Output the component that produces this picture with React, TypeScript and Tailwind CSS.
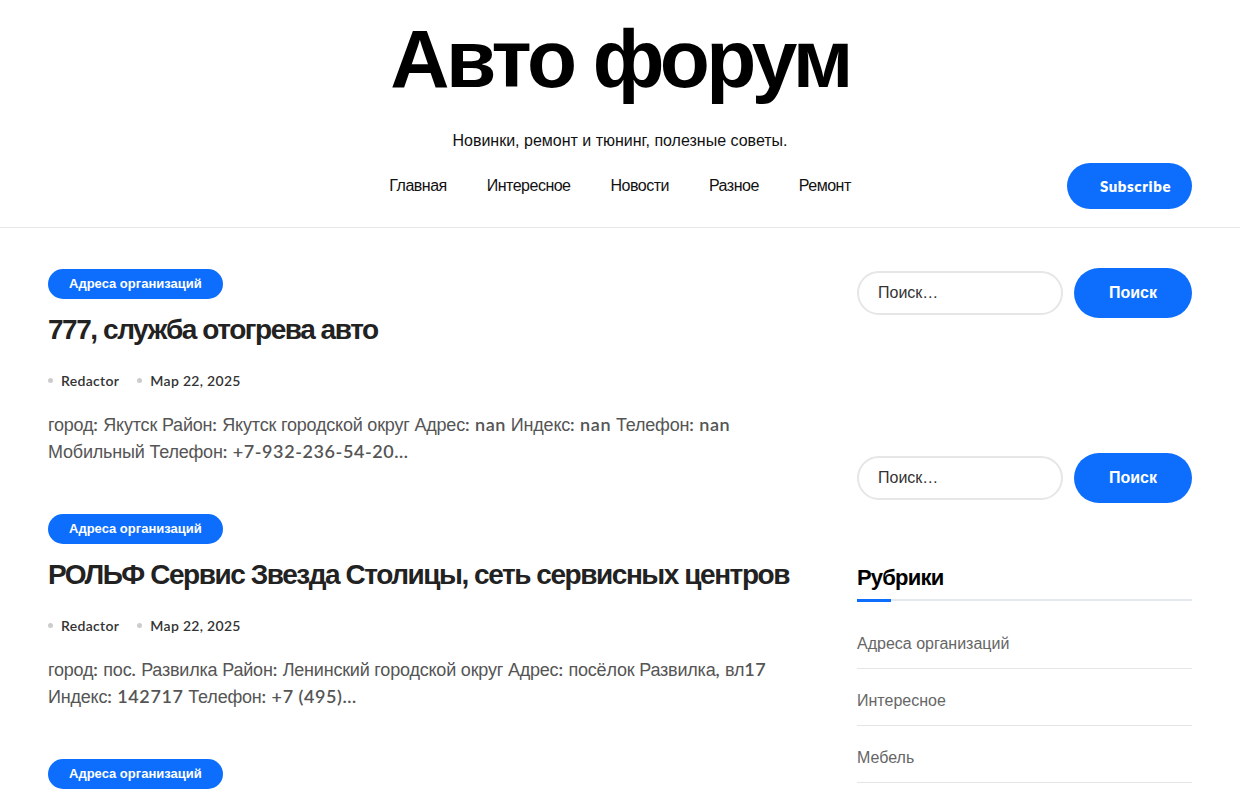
import React from "react";

const posts = [
  {
    title: "777, служба отогрева авто",
    excerpt:
      "город: Якутск Район: Якутск городской округ Адрес: nan Индекс: nan Телефон: nan Мобильный Телефон: +7-932-236-54-20…",
  },
  {
    title: "РОЛЬФ Сервис Звезда Столицы, сеть сервисных центров",
    excerpt:
      "город: пос. Развилка Район: Ленинский городской округ Адрес: посёлок Развилка, вл17 Индекс: 142717 Телефон: +7 (495)…",
  },
  {
    title: "",
    excerpt: "",
  },
];

const navItems = ["Главная", "Интересное", "Новости", "Разное", "Ремонт"];
const rubrics = ["Адреса организаций", "Интересное", "Мебель"];

// latin, digits and punctuation fall to the geometric face, cyrillic to arial
function Mixed({ text }: { text: string }) {
  const parts = text.split(/([!-~…–]+)/);
  return (
    <>
      {parts.map((p, i) =>
        /^[!-~…–]+$/.test(p) ? (
          <span key={i} className="font-['Lato',sans-serif] font-semibold text-[18px] leading-none tracking-[0.6px]">
            {p}
          </span>
        ) : (
          <span key={i}>{p}</span>
        )
      )}
    </>
  );
}

function SearchForm() {
  return (
    <div className="flex items-center gap-[11px]">
      <div className="h-[44px] w-[206px] rounded-full border-2 border-[#e6e6e6] flex items-center px-[19px] text-[16px] text-[#333]">
        Поиск…
      </div>
      <button className="h-[50px] flex-1 rounded-full bg-[#0d6efd] text-white font-bold text-[16px]">
        Поиск
      </button>
    </div>
  );
}

export default function App() {
  return (
    <div className="min-h-screen bg-white font-['Liberation_Sans',Arial,sans-serif] text-[#111]">
      <header className="border-b border-[#e8e8e8]">
        <div className="mx-auto w-[1144px] pt-[14px] pb-[18px]">
          <h1 className="text-center text-[82px] leading-[90px] font-bold tracking-[-3.6px] text-black">
            Авто форум
          </h1>
          <p className="mt-[25px] text-center text-[16px] leading-[24px] text-[#111]">
            Новинки, ремонт и тюнинг, полезные советы.
          </p>
          <div className="mt-[10px] flex items-center">
            <div className="flex-1" />
            <nav className="flex items-center gap-[40px] text-[16px] tracking-[-0.5px] text-[#111]">
              {navItems.map((n) => (
                <a key={n} href="#">
                  {n}
                </a>
              ))}
            </nav>
            <div className="flex-1 flex justify-end">
              <button className="h-[46px] w-[125px] rounded-full bg-[#0d6efd] pl-[12px] text-white font-['Lato',sans-serif] font-extrabold text-[15px] tracking-[0.6px]">
                Subscribe
              </button>
            </div>
          </div>
        </div>
      </header>

      <div className="mx-auto w-[1144px] flex gap-[57px] pt-[41px]">
        <main className="w-[752px] flex flex-col gap-[48px]">
          {posts.map((p, i) => (
            <article key={i}>
              <span className="inline-flex h-[30px] items-center rounded-full bg-[#0d6efd] px-[21px] text-[13px] font-bold text-white">
                Адреса организаций
              </span>
              {p.title && (
                <>
                  <h2 className="mt-[14px] text-[28px] leading-[34px] font-bold tracking-[-1.45px] text-[#222] whitespace-nowrap">
                    {p.title}
                  </h2>
                  <div className="mt-[23px] flex items-center gap-[18px] font-['Lato',sans-serif] text-[14px] font-semibold tracking-[0.3px] text-[#333]">
                    <span className="flex items-center gap-[8px]">
                      <span className="h-[5px] w-[5px] rounded-full bg-[#ccc]" />
                      Redactor
                    </span>
                    <span className="flex items-center gap-[8px]">
                      <span className="h-[5px] w-[5px] rounded-full bg-[#ccc]" />
                      Mар 22, 2025
                    </span>
                  </div>
                  <p className="mt-[21px] text-[18px] leading-[27px] text-[#555] tracking-[-0.2px]">
                    <Mixed text={p.excerpt} />
                  </p>
                </>
              )}
            </article>
          ))}
        </main>

        <aside className="w-[335px] -mt-[1px]">
          <SearchForm />
          <div className="h-[135px]" />
          <SearchForm />
          <div className="mt-[61px]">
            <h3 className="text-[22px] leading-[28px] font-bold tracking-[-0.8px] text-black">
              Рубрики
            </h3>
            <div className="relative mt-[7px] h-[2px] bg-[#e3e8ef]">
              <div className="absolute left-0 top-[-0.5px] h-[3px] w-[34px] bg-[#0d6efd]" />
            </div>
            <ul className="mt-[11px]">
              {rubrics.map((r) => (
                <li
                  key={r}
                  className="border-b border-[#e5e5e5] pt-[18px] pb-[10px] text-[16px] leading-[28px] text-[#666]"
                >
                  {r}
                </li>
              ))}
            </ul>
          </div>
        </aside>
      </div>
    </div>
  );
}
